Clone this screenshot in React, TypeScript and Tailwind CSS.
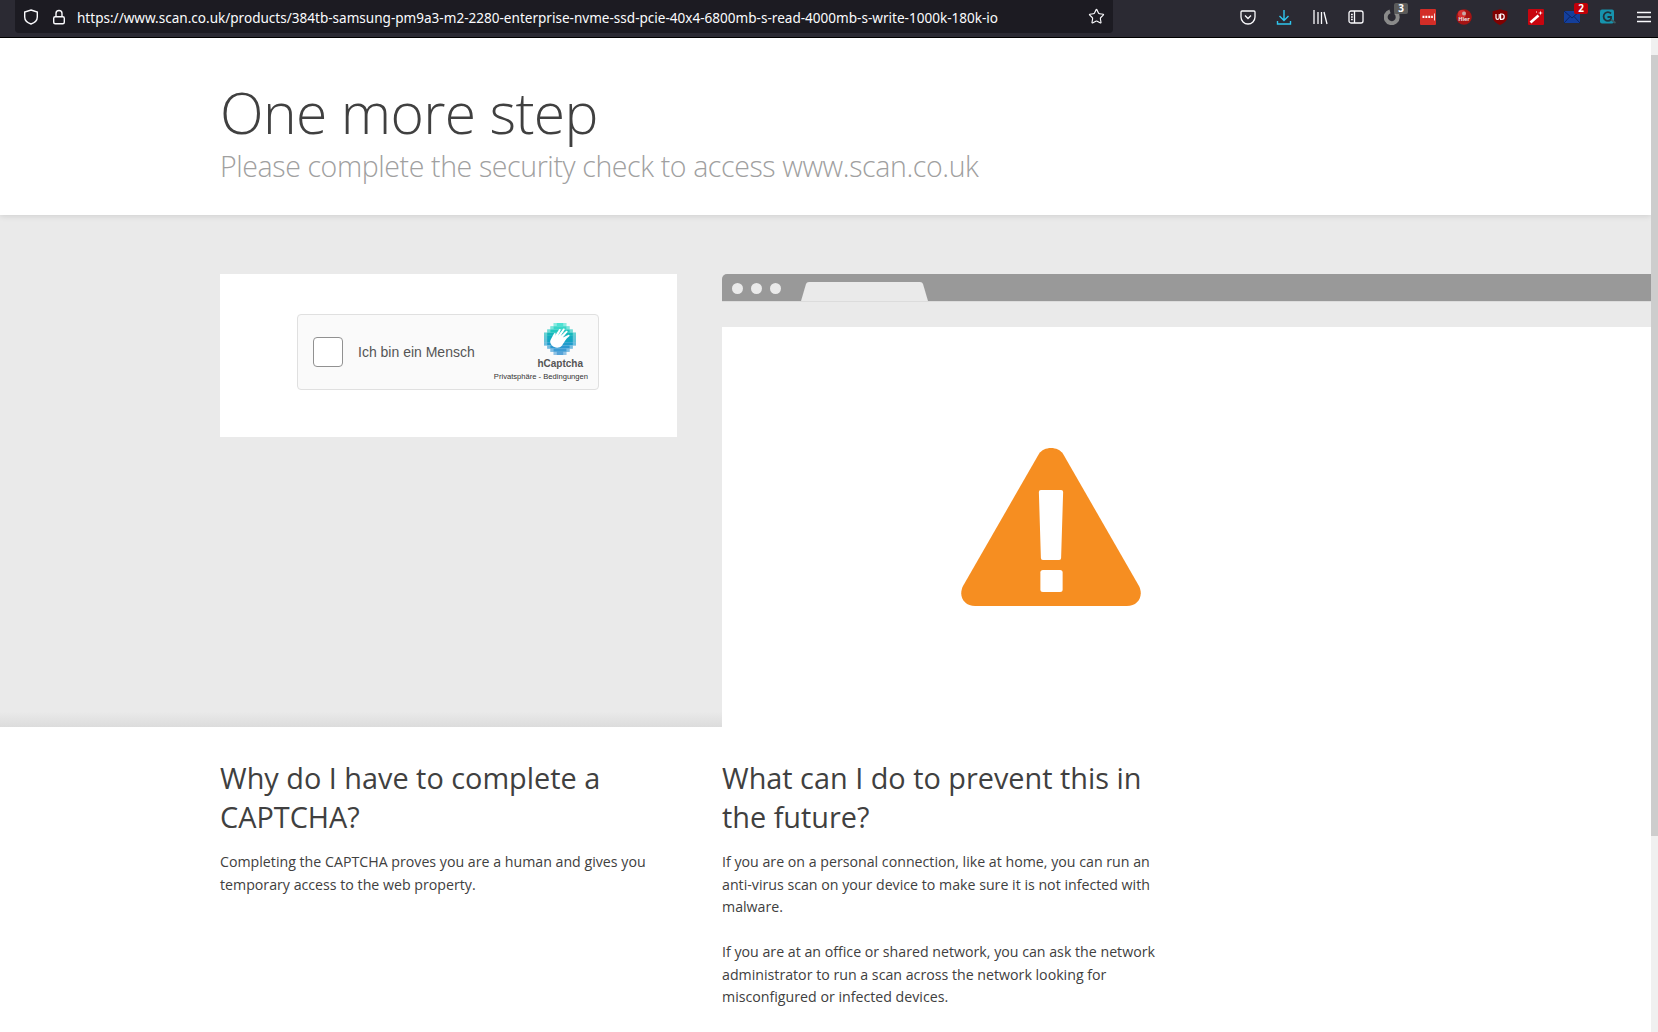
import { Star } from 'lucide-react';

const SANS = 'font-["Open_Sans",sans-serif]';

function ShieldIcon() {
  return (
    <svg width="16" height="16" viewBox="0 0 16 16" fill="none" stroke="#fbfbfe" strokeWidth="1.4">
      <path d="M8 1 L14.3 3 V8 C14.3 11.5 11 14 8 15 C5 14 1.7 11.5 1.7 8 V3 Z" />
    </svg>
  );
}

function LockIcon() {
  return (
    <svg width="16" height="16" viewBox="0 0 16 16" fill="none" stroke="#fbfbfe" strokeWidth="1.4">
      <rect x="2.7" y="7.7" width="10.6" height="7" rx="1.5" />
      <path d="M5 7.5 V4.5 a3 3 0 0 1 6 0 V7.5" />
    </svg>
  );
}

function Badge({ n, className }: { n: string; className: string }) {
  return (
    <span className={`absolute -top-[6px] -right-[8px] w-[14px] h-[11px] text-center rounded-[2px] text-[10px] leading-[11px] font-bold text-white ${className}`}>
      {n}
    </span>
  );
}

function ToolbarIcons() {
  return (
    <div className="ml-auto flex items-center gap-5 pr-[6px] pb-[3px]">
      {/* pocket */}
      <svg width="16" height="16" viewBox="0 0 16 16" fill="none" stroke="#fbfbfe" strokeWidth="1.3">
        <path d="M2 2 H14 a1 1 0 0 1 1 1 V8 a7 7 0 0 1 -14 0 V3 a1 1 0 0 1 1 -1 Z" />
        <path d="M5 6.5 L8 9.5 L11 6.5" />
      </svg>
      {/* downloads */}
      <svg width="16" height="16" viewBox="0 0 16 16" fill="none" stroke="#2fc6ee" strokeWidth="1.4">
        <path d="M8 1 V11 M3.5 7 L8 11.5 L12.5 7 M1.5 12 V15 H14.5 V12" />
      </svg>
      {/* library */}
      <svg width="16" height="16" viewBox="0 0 16 16" fill="none" stroke="#fbfbfe" strokeWidth="1.3">
        <path d="M2 1 V15 M6 3 V15 M9.5 3 V15 M12 3 L15 15" />
      </svg>
      {/* sidebar */}
      <svg width="16" height="16" viewBox="0 0 16 16" fill="none" stroke="#fbfbfe" strokeWidth="1.3">
        <rect x="1" y="2" width="14" height="12" rx="2" />
        <path d="M6.5 2 V14 M3 5.5 H4.8 M3 8 H4.8 M3 10.5 H4.8" />
      </svg>
      <div className="relative w-4 h-4">
        <svg width="16" height="16" viewBox="0 0 16 16" fill="none" stroke="#8a8a8a" strokeWidth="4">
          <path d="M11.5 3.5 A6 6 0 1 1 6 2.4" />
        </svg>
        <Badge n="3" className="bg-[#5b5b5b]" />
      </div>
      {/* lastpass */}
      <svg width="16" height="16" viewBox="0 0 16 16">
        <rect width="16" height="16" rx="1" fill="#d32d27" />
        <path d="M2.5 6.8 H4.4 V9 H2.5 Z M5.4 6.8 H7.3 V9 H5.4 Z M8.3 6.8 H10.2 V9 H8.3 Z M11.2 6.8 H12.8 V9 H11.2 Z" fill="#fff" />
        <rect x="14" y="4.5" width="0.8" height="7" fill="#fff" />
      </svg>
      <svg width="16" height="16" viewBox="0 0 16 16">
        <circle cx="8" cy="8" r="7.8" fill="#a51414" />
        <circle cx="6" cy="5" r="4" fill="#d83030" />
        <circle cx="8" cy="4.6" r="2" fill="#c8a8a8" />
        <text x="8" y="12" textAnchor="middle" fontSize="5.5" fontWeight="700" fill="#f4e4e4">Hier</text>
      </svg>
      {/* ublock */}
      <svg width="16" height="16" viewBox="0 0 16 16">
        <path d="M8 0.3 L15.4 2.3 V8 C15.4 12 11 14.8 8 16 C5 14.8 0.6 12 0.6 8 V2.3 Z" fill="#800000" />
        <path d="M4 5 V8.8 a1.6 1.6 0 0 0 3.2 0 V5 M8.6 5 V10.4 H9.8 a2.4 2.7 0 0 0 0 -5.4 Z" fill="none" stroke="#fff" strokeWidth="1.2" />
      </svg>
      <svg width="16" height="16" viewBox="0 0 16 16">
        <rect width="16" height="16" rx="1" fill="#c8050f" />
        <path d="M2.5 13.5 L10.5 6.5" stroke="#fff" strokeWidth="2.6" />
        <path d="M12.5 1.5 L13 3.5 L15 4 L13 4.5 L12.5 6.5 L12 4.5 L10 4 L12 3.5 Z M8 2.5 h1 v1 h-1 Z" fill="#fff" />
      </svg>
      <div className="relative w-4 h-4">
        <svg width="16" height="16" viewBox="0 0 16 16">
          <rect y="2" width="16" height="12" fill="#143f9c" />
          <path d="M0 2 L8 9 L16 2 M0 14 L6 7.5 M16 14 L10 7.5" fill="none" stroke="#0b2560" strokeWidth="1" />
        </svg>
        <Badge n="2" className="bg-[#c00008]" />
      </div>
      {/* teal square with dark G */}
      <svg width="16" height="16" viewBox="0 0 16 16" fill="none">
        <rect x="0" y="0.5" width="14" height="14" rx="2" fill="#1693ad" />
        <path d="M11 4.5 A4.3 4.3 0 1 0 11 10.5 V8 H7.5" stroke="#20323c" strokeWidth="1.8" />
        <path d="M11 10.5 L15.5 14" stroke="#3c5a60" strokeWidth="1.6" />
      </svg>
      {/* menu */}
      <svg width="16" height="16" viewBox="0 0 16 16" stroke="#fbfbfe" strokeWidth="1.4">
        <path d="M1 3.5 H15 M1 8 H15 M1 12.5 H15" />
      </svg>
    </div>
  );
}

function Toolbar() {
  return (
    <div className="h-[38px] shrink-0 flex items-start bg-[#2b2a33] border-b border-black pl-[15px]">
      <div className="w-[1098px] h-[33px] flex items-center bg-[#1c1b22] rounded-b-[4px] pl-[8px] pr-[8px]">
        <ShieldIcon />
        <span className="w-[12px]" />
        <LockIcon />
        <span className='ml-[10px] pt-[3px] flex-1 text-[13.55px] text-[#fbfbfe] whitespace-nowrap font-["Noto_Sans",sans-serif]'>
          https://www.scan.co.uk/products/384tb-samsung-pm9a3-m2-2280-enterprise-nvme-ssd-pcie-40x4-6800mb-s-read-4000mb-s-write-1000k-180k-io
        </span>
        <Star className="w-[17px] h-[17px] text-[#fbfbfe]" strokeWidth={1.6} />
      </div>
      <div className="ml-auto self-center flex-1 flex">
        <ToolbarIcons />
      </div>
    </div>
  );
}

function HCaptchaLogo() {
  // 10x10 pixel grid, corners cut, edge cells tinted lighter
  const rows = [
    [3, 4], [2, 6], [1, 8], [0, 10], [0, 10], [0, 10], [0, 10], [1, 8], [2, 6], [3, 4],
  ];
  const colors = ['#4de1d2', '#38d6c8', '#22c8c0', '#14b8bc', '#12acc0', '#14a4c4', '#1e9ccc', '#2c98d0', '#3c9bd4', '#55a3d8'];
  return (
    <svg width="32" height="32" viewBox="0 0 32 32">
      {rows.map(([start, count], y) => (
        <g key={y}>
          <rect x={start * 3.2} y={y * 3.2} width={count * 3.2} height="3.3" fill={colors[y]} />
          <rect x={start * 3.2} y={y * 3.2} width="3.2" height="3.3" fill="#fff" opacity="0.35" />
          <rect x={(start + count - 1) * 3.2} y={y * 3.2} width="3.2" height="3.3" fill="#fff" opacity="0.35" />
        </g>
      ))}
      <path
        d="M6.5 17 L10 10.5 C10.6 9.4 12 10 11.6 11.2 L10.8 13 L15 6.6 C15.7 5.5 17.2 6.3 16.6 7.5 L14 12.4 L19 6 C19.8 5 21.2 5.9 20.5 7.1 L16.6 13 L22 8 C23 7.1 24.2 8.3 23.3 9.3 L18.8 14.4 L24.2 12 C25.4 11.4 26.2 12.8 25 13.6 C22 15.6 20.4 19.4 18 22.6 C15.6 25.6 10.6 25.4 8 22.6 C6.4 20.8 5.7 18.8 6.5 17 Z"
        fill="#fff"
      />
    </svg>
  );
}

function CaptchaWidget() {
  return (
    <div className='w-[302px] h-[76px] flex bg-[#fafafa] border border-[#e0e0e0] rounded-[4px] font-["Liberation_Sans",sans-serif]'>
      <div className="flex items-center flex-1 pl-[15px]">
        <div className="w-[30px] h-[30px] bg-white border border-[#919191] rounded-[4px]" />
        <span className="ml-[15px] text-[14px] text-[#555]">Ich bin ein Mensch</span>
      </div>
      <div className="flex flex-col items-end pt-[8px] pr-[10px]">
        <div className="mr-[12px]">
          <HCaptchaLogo />
        </div>
        <span className="mt-[2px] mr-[5px] text-[10px] leading-[14px] font-bold text-[#555]">hCaptcha</span>
        <span className="text-[7.6px] leading-[12px] text-[#333] whitespace-nowrap">Privatsphäre - Bedingungen</span>
      </div>
    </div>
  );
}

function WarningIcon() {
  return (
    <svg width="180" height="158" viewBox="0 0 178 158" preserveAspectRatio="none">
      <path
        d="M77 6 C82 -2 96 -2 101 6 L176 138 C181 148 175 158 164 158 H14 C3 158 -3 148 2 138 Z"
        fill="#f68e21"
      />
      <path d="M77 44 a2 2 0 0 1 2 -2 H99 a2 2 0 0 1 2 2 L99 110 a2 2 0 0 1 -2 2 H81 a2 2 0 0 1 -2 -2 Z" fill="#fff" />
      <rect x="78.5" y="122" width="22" height="22" rx="2.5" fill="#fff" />
    </svg>
  );
}

function MockBrowser() {
  return (
    <div className="flex-1 flex flex-col">
      <div className="h-[28px] flex bg-[#999999] rounded-tl-[5px] border-b border-[#dcdcdc] pl-[10px]">
        <div className="flex gap-2 pt-[9px]">
          <span className="w-[11px] h-[11px] rounded-full bg-[#eaeaea]" />
          <span className="w-[11px] h-[11px] rounded-full bg-[#eaeaea]" />
          <span className="w-[11px] h-[11px] rounded-full bg-[#eaeaea]" />
        </div>
        <svg className="ml-[20px] mt-[8px]" width="127" height="19" viewBox="0 0 127 19">
          <path d="M0 19 L5 2 Q5.6 0 8 0 H119 Q121.4 0 122 2 L127 19 Z" fill="#eaeaea" />
        </svg>
      </div>
      <div className="mt-[25px] flex-1 bg-white pl-[239px] pt-[121px]">
        <WarningIcon />
      </div>
    </div>
  );
}

export default function App() {
  return (
    <div className={`h-[1032px] overflow-hidden flex flex-col bg-white ${SANS}`}>
      <Toolbar />
      <div className="flex-1 flex min-h-0">
        <div className="flex-1 min-w-0 overflow-hidden">
          <header className="h-[177px] pl-[220px] pt-[37px] bg-white relative z-10 shadow-[0_1px_6px_rgba(0,0,0,0.12)]">
            <h1 className="text-[57px] tracking-[-0.65px] leading-[75px] font-light text-[#404040]">One more step</h1>
            <h2 className="text-[28.5px] tracking-[-0.39px] leading-[40px] font-light text-[#a0a0a0] -mt-[4px]">
              Please complete the security check to access www.scan.co.uk
            </h2>
          </header>
          <section className="h-[512px] flex pl-[220px] pt-[59px] gap-[45px] bg-[linear-gradient(to_bottom,#eaeaea_97%,#dcdcdc_100%)]">
            <div className="w-[457px] h-[163px] bg-white flex pl-[77px] pt-[40px]">
              <CaptchaWidget />
            </div>
            <MockBrowser />
          </section>
          <section className="flex pl-[220px] pt-[31px] gap-[45px] text-[#404040]">
            <div className="w-[457px]">
              <h3 className="text-[28.85px] leading-[39px]">Why do I have to complete a<br />CAPTCHA?</h3>
              <p className="mt-[15px] text-[14.2px] leading-[22.5px]">
                Completing the CAPTCHA proves you are a human and gives you<br />
                temporary access to the web property.
              </p>
            </div>
            <div className="w-[457px]">
              <h3 className="text-[28.85px] leading-[39px]">What can I do to prevent this in<br />the future?</h3>
              <p className="mt-[15px] text-[14.2px] leading-[22.5px]">
                If you are on a personal connection, like at home, you can run an<br />
                anti-virus scan on your device to make sure it is not infected with<br />
                malware.
              </p>
              <p className="mt-[22.5px] text-[14.2px] leading-[22.5px]">
                If you are at an office or shared network, you can ask the network<br />
                administrator to run a scan across the network looking for<br />
                misconfigured or infected devices.
              </p>
            </div>
          </section>
        </div>
        {/* scrollbar */}
        <div className="w-[7px] shrink-0 flex flex-col bg-[#f0f0f0]">
          <div className="h-[17px]" />
          <div className="h-[781px] bg-[#cdcdcd]" />
        </div>
      </div>
    </div>
  );
}
